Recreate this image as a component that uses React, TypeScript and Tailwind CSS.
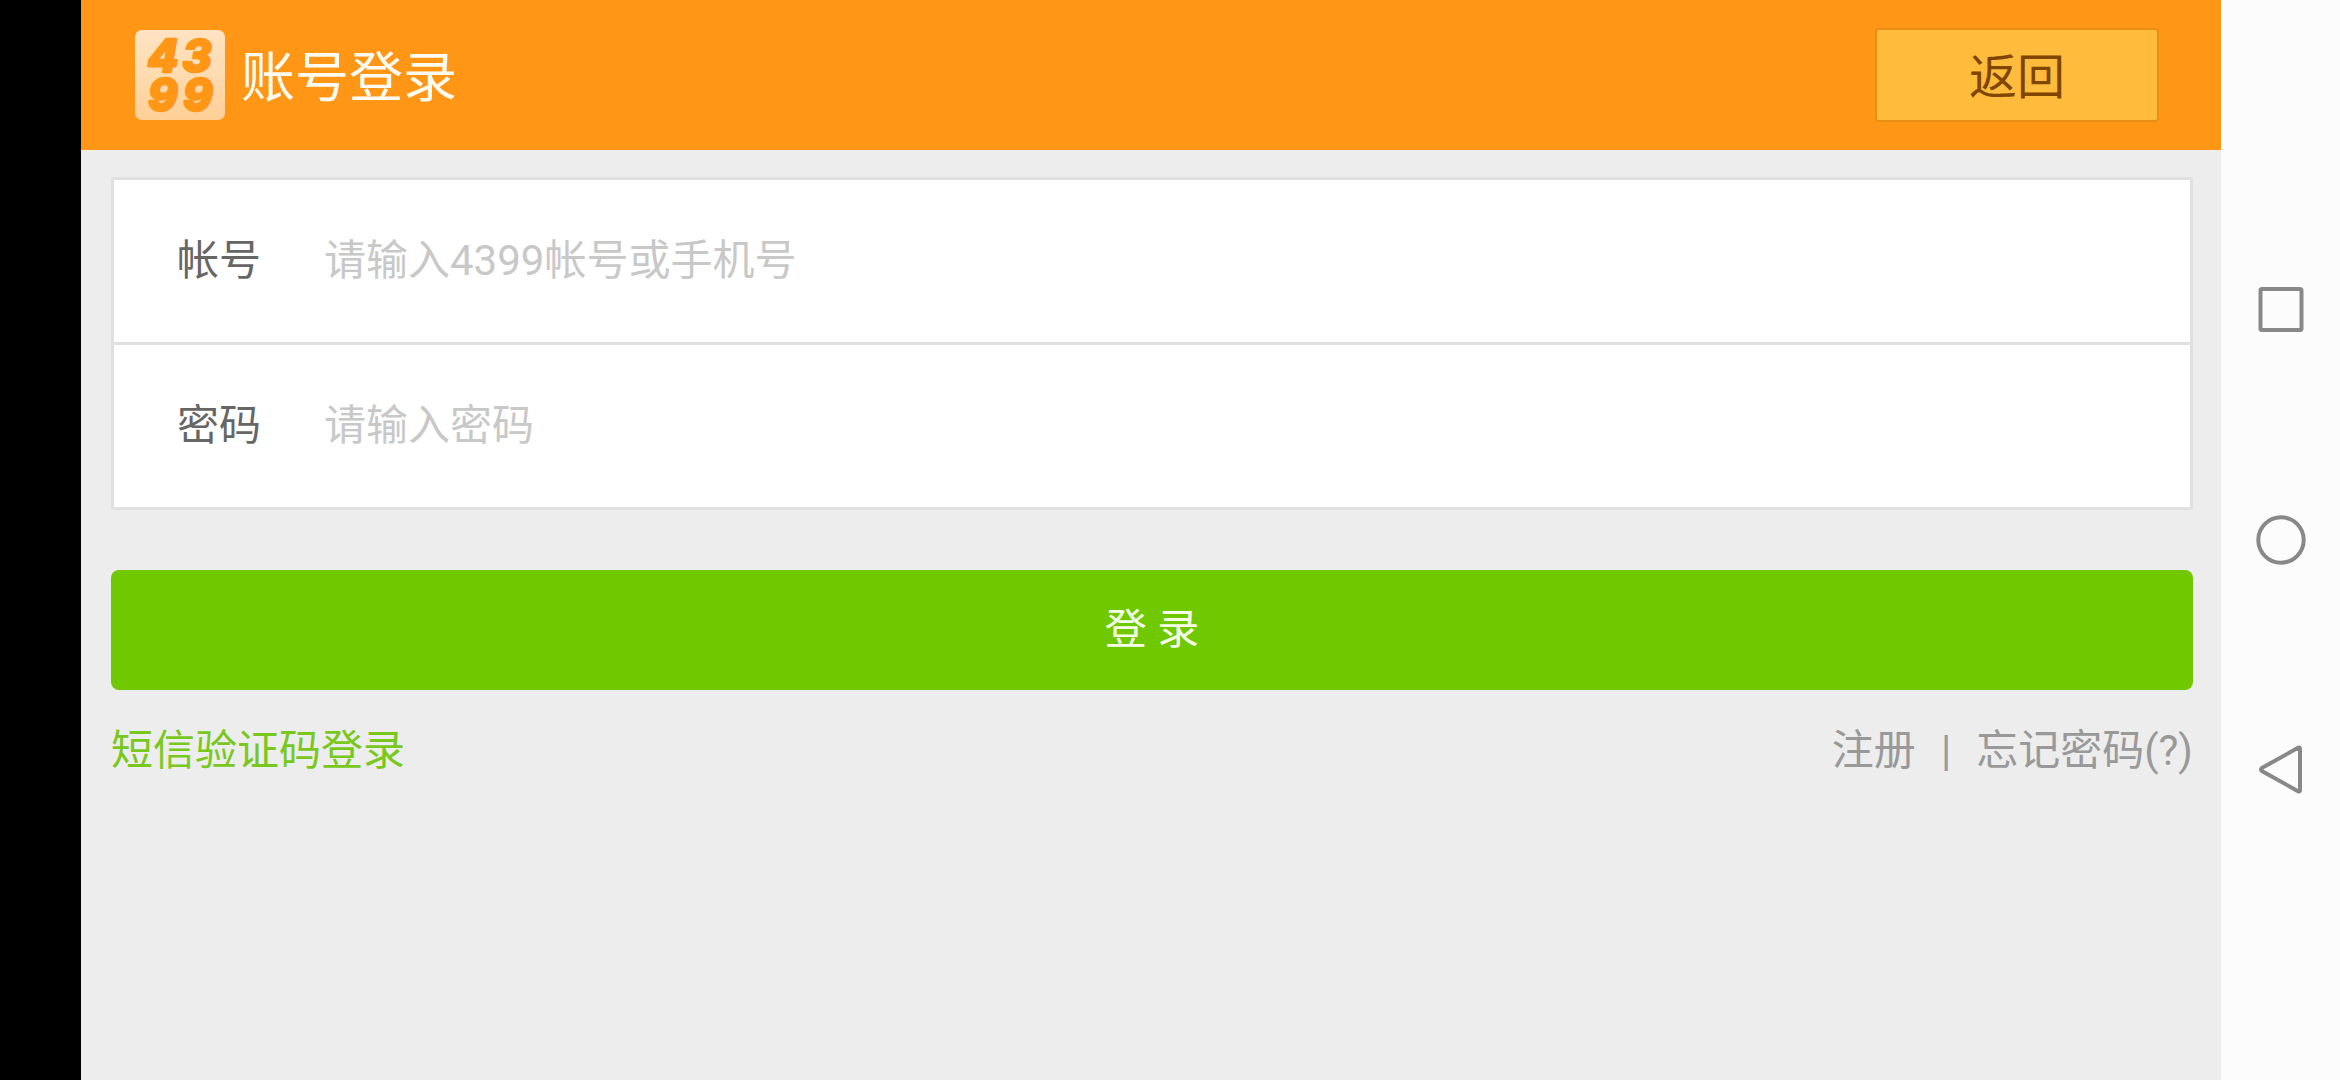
import React, { useState } from 'react';

interface FieldProps {
  id: string;
  label: string;
  type: string;
  placeholder: string;
  value: string;
  onChange: (value: string) => void;
}

const Field: React.FC<FieldProps> = ({ id, label, type, placeholder, value, onChange }) => (
  <div className="flex items-center gap-[63px] px-[63px]">
    <label htmlFor={id} className="shrink-0 text-[#666666]">
      {label}
    </label>
    <input
      id={id}
      type={type}
      value={value}
      placeholder={placeholder}
      onChange={(e) => onChange(e.target.value)}
      className="h-[162px] min-w-0 flex-1 bg-transparent pb-0.5 text-[#666666] placeholder-[#c8c8c8] outline-none"
    />
  </div>
);

const Logo: React.FC = () => (
  <svg viewBox="0 0 90 90" className="size-[90px] shrink-0 overflow-visible" role="img" aria-label="4399">
    <defs>
      <linearGradient id="logo-bg" x1="0" y1="0" x2="0" y2="1">
        <stop offset="0" stopColor="#ffe3c2" />
        <stop offset="0.5" stopColor="#ffdbb0" />
        <stop offset="1" stopColor="#ffcf96" />
      </linearGradient>
    </defs>
    <rect width="90" height="90" rx="7" fill="url(#logo-bg)" />
    <g
      fill="#ff9616"
      stroke="#ff9616"
      strokeWidth="2.5"
      strokeLinejoin="round"
      fontFamily="Inter, sans-serif"
      fontWeight="800"
      fontStyle="italic"
      fontSize="45"
      textAnchor="middle"
    >
      <text x="28 62" y="42">43</text>
      <text x="28 63" y="81">99</text>
    </g>
  </svg>
);

// Android system navigation keys
const SystemNav: React.FC = () => (
  <nav className="flex w-[119px] shrink-0 flex-col items-center justify-center gap-[180px] bg-[#fcfcfc] text-[#888888]">
    <button type="button" aria-label="最近任务">
      <svg viewBox="0 0 50 50" className="size-[50px]" fill="none" stroke="currentColor" strokeWidth="4">
        <rect x="4.5" y="4" width="41" height="41" rx="1.5" />
      </svg>
    </button>
    <button type="button" aria-label="主页">
      <svg viewBox="0 0 50 50" className="size-[50px]" fill="none" stroke="currentColor" strokeWidth="4">
        <circle cx="25" cy="25" r="22.7" />
      </svg>
    </button>
    <button type="button" aria-label="后退">
      <svg viewBox="0 0 50 50" className="size-[50px]" fill="none" stroke="currentColor" strokeWidth="4" strokeLinejoin="round">
        <path d="M42.5 2.6 Q44 2 44 4 V45 Q44 47 42.5 46.4 L5.8 26 Q4.2 24.5 5.8 23 Z" />
      </svg>
    </button>
  </nav>
);

const App: React.FC = () => {
  const [account, setAccount] = useState('');
  const [password, setPassword] = useState('');

  return (
    <div className="flex min-h-screen bg-[#ededed] font-[Roboto,'Noto_Sans_CJK_SC',sans-serif] text-[42px] leading-[60px]">
      <div className="w-[81px] shrink-0 bg-black" />

      <div className="min-w-0 flex-1">
        <header className="flex h-[150px] items-center justify-between bg-[#ff9616] pr-[62px] pl-[54px]">
          <div className="flex items-center gap-4">
            <Logo />
            <h1 className="pt-2 text-[54px] text-[#fffbf0]">账号登录</h1>
          </div>
          <button
            type="button"
            className="h-[94px] w-[284px] rounded-sm border-2 border-[#e88f14] bg-[#ffbb3c] pt-1.5 text-[48px] text-[#804600]"
          >
            返回
          </button>
        </header>

        <main className="pt-[27px] pr-[28px] pl-[30px]">
          <form onSubmit={(e) => e.preventDefault()}>
            <div className="divide-y-3 divide-[#e0e0e0] border-3 border-[#e0e0e0] bg-white">
              <Field
                id="account"
                label="帐号"
                type="text"
                placeholder="请输入4399帐号或手机号"
                value={account}
                onChange={setAccount}
              />
              <Field
                id="password"
                label="密码"
                type="password"
                placeholder="请输入密码"
                value={password}
                onChange={setPassword}
              />
            </div>
            <button type="submit" className="mt-[60px] h-[120px] w-full rounded-lg bg-[#70c900] text-[#f4ffe6]">
              登 录
            </button>
          </form>

          <div className="flex items-center justify-between pt-[31px]">
            <a href="#sms" className="text-[#79c81e]">
              短信验证码登录
            </a>
            <div className="flex gap-[25px] text-[#999999]">
              <a href="#register">注册</a>
              <span>|</span>
              <a href="#forgot">忘记密码(?)</a>
            </div>
          </div>
        </main>
      </div>

      <SystemNav />
    </div>
  );
};

export default App;
